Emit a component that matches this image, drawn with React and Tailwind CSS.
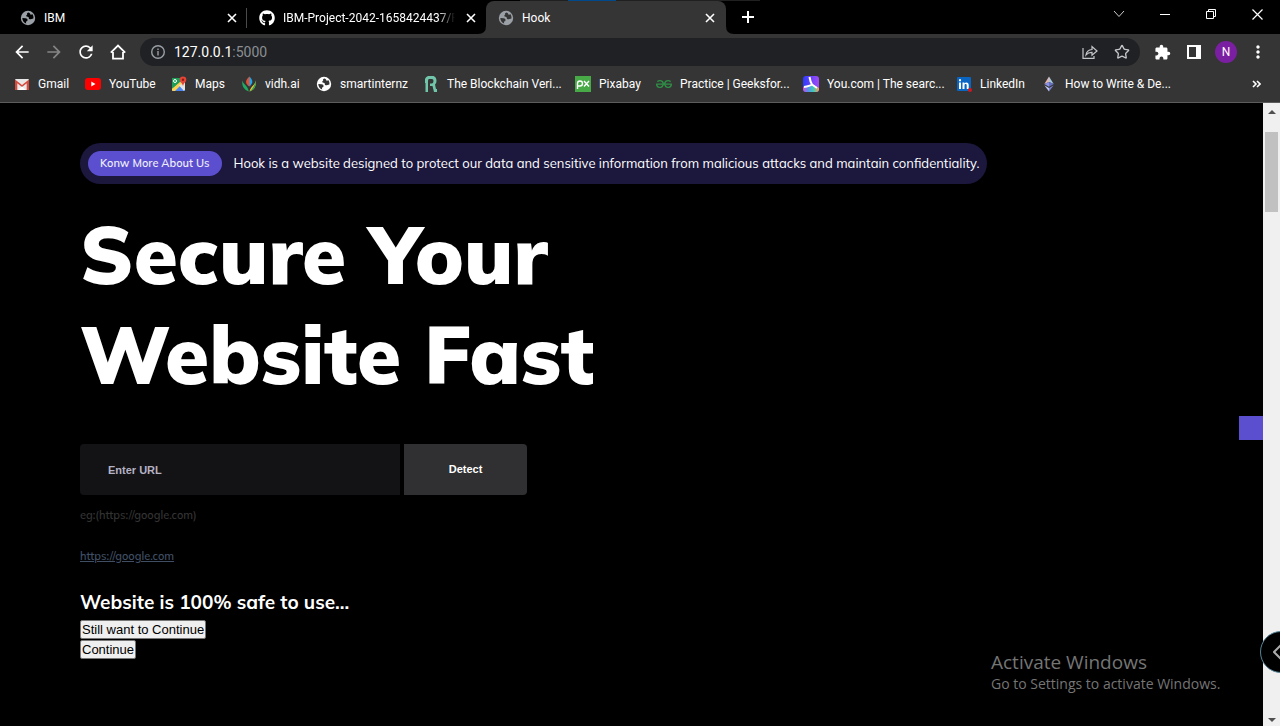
import React from "react";
import { Star } from "lucide-react";
import { FaGithub } from "react-icons/fa";
import { MdExtension, MdRefresh, MdArrowBack, MdArrowForward, MdMoreVert } from "react-icons/md";
import { SiGeeksforgeeks } from "react-icons/si";

const Globe = ({ color, hole }) => (
  <svg width="16" height="16" viewBox="0 0 16 16" className="shrink-0" aria-hidden="true">
    <circle cx="8" cy="8" r="7.2" fill={color} />
    <path
      fill={hole}
      d="M8.2 2.4C7 3 6.600 3.700 7.300 4.500C6.300 5 6 5.700 6.600 6.400L7.600 6.700C8.600 6.900 9 7.500 8.800 8.300C8.900 9.200 9.800 9.300 10.700 9.200L13.400 8.600C13.700 7 13.200 5.200 12.200 4.100C11.600 4.900 10.600 4.900 10.300 4.200C10.300 3.400 9.700 2.700 8.200 2.400ZM2.300 8.100L5.600 8.200C6.900 8.300 7.600 9 7.500 10L7.300 10.900C6.300 11.100 5.900 11.700 6 12.600L6.200 13.500C3.900 12.800 2.300 10.700 2.300 8.100Z"
    />
  </svg>
);

const GmailIcon = () => (
  <svg width="16" height="16" viewBox="0 0 16 16" aria-hidden="true">
    <rect x="1" y="3" width="14" height="11" rx="1" fill="#e8e8e8" />
    <path d="M1 3.500L8 9L15 3.500V14H12.700V7.300L8 11L3.300 7.300V14H1Z" fill="#d54b3d" />
    <path d="M4 14L8 10.500L12 14Z" fill="#fff" />
  </svg>
);

const YoutubeIcon = () => (
  <svg width="16" height="16" viewBox="0 0 16 16" aria-hidden="true">
    <rect x="0" y="2" width="16" height="12" rx="3" fill="#f00" />
    <path d="M6.300 5.500L10.500 8L6.300 10.500Z" fill="#fff" />
  </svg>
);

const MapsIcon = () => (
  <svg width="16" height="16" viewBox="0 0 16 16" aria-hidden="true">
    <rect x="1" y="2" width="13" height="13" rx="1" fill="#e8e3d8" />
    <path d="M1 2H9L10 6L1 13Z" fill="#1f9d58" />
    <path d="M3 15L9 9L14 15Z" fill="#4a86ee" />
    <path d="M1 13L9 6L11 8L4 15H2Z" fill="#ffd04b" />
    <path d="M9.500 8L13 12V15L8 9.500Z" fill="#dfe4ea" />
    <circle cx="4" cy="5" r="1.500" fill="none" stroke="#fff" />
    <path d="M12 0.500A3.300 3.300 0 0 1 15.300 3.800C15.300 6 12.700 7 12 10C11.300 7 8.700 6 8.700 3.800A3.300 3.300 0 0 1 12 .5Z" fill="#e64435" />
    <circle cx="12" cy="3.800" r="1.200" fill="#8c1d16" />
  </svg>
);

const VidhIcon = () => (
  <svg width="16" height="16" viewBox="0 0 16 16" aria-hidden="true">
    <path d="M8.500 .5C12.500 5 12 7 8.500 10.500C7 8 7 4 8.500 .5Z" fill="#24a5e8" />
    <path d="M8.500 .5C3.500 5 4.500 7.500 8.200 10.500C8.800 7 8 4 8.500 .5Z" fill="#e8502f" />
    <path d="M1.500 4.500C2 8.500 6.500 9 7.800 15.500C3.500 14 .3 10 1.500 4.500Z" fill="#1fab62" />
    <path d="M14.500 4.500C14.500 9 10 9.500 8.500 15.500C13 14.500 15.700 10 14.500 4.500Z" fill="#f2c230" />
    <path d="M14.500 4.500C15.700 10 13 14.500 8.500 15.500C12 12.500 14 9 14.500 4.500Z" fill="#21a558" />
  </svg>
);

const BlockchainIcon = () => (
  <svg width="16" height="16" viewBox="0 0 16 16" aria-hidden="true">
    <path
      fill="#70c5aa"
      fillRule="evenodd"
      d="M5 0H10.500Q13.500 1 13.500 5Q13.500 7.500 12 8.500L13 13H14V16H11L9.500 10H7V7.500H9Q10.500 7 10.500 5Q10.500 3 9 3H6Q5 3 5 5V16H2.500V7H2V3Q2.500 1 5 0Z"
    />
  </svg>
);

const PixabayIcon = () => (
  <svg width="16" height="16" viewBox="0 0 16 16" aria-hidden="true">
    <rect width="16" height="16" fill="#48a947" />
    <g fill="none" stroke="#fff" strokeWidth="1.400">
      <path d="M2.500 13V7.500A2.500 2.500 0 1 1 5 10H2.500" />
      <path d="M9 5L14 10.500M14 5L9 10.500" />
    </g>
  </svg>
);

const YouIcon = () => (
  <svg width="16" height="16" viewBox="0 0 16 16" aria-hidden="true">
    <defs>
      <linearGradient id="youTop" x1="0" y1="0" x2="1" y2="0">
        <stop offset="0" stopColor="#2b3cff" />
        <stop offset="1" stopColor="#a24bf5" />
      </linearGradient>
      <linearGradient id="youBottom" x1="0" y1="0" x2="1" y2="0">
        <stop offset="0" stopColor="#d44bd8" />
        <stop offset=".3" stopColor="#5a8cf0" />
        <stop offset=".65" stopColor="#3ccbb5" />
        <stop offset="1" stopColor="#ff9a5a" />
      </linearGradient>
    </defs>
    <rect width="16" height="16" rx="3" fill="url(#youTop)" />
    <path d="M0 11L9 8.500L16 12V13Q16 16 13 16H3Q0 16 0 13Z" fill="url(#youBottom)" />
    <path d="M6.500 1C7 4 7.500 6 9 8.500C7 10 4.500 10.500 1 11M9 8.500L14 12" fill="none" stroke="#fff" strokeWidth="2" />
  </svg>
);

const LinkedinIcon = () => (
  <svg width="16" height="16" viewBox="0 0 16 16" aria-hidden="true">
    <rect x="1" y="1" width="14" height="14" rx="1" fill="#0a66c2" />
    <path d="M3 6.500H5V13H3ZM3 3.300H5V5.200H3ZM6.500 6.500H8.400V7.400C9.500 5.900 12.700 6 12.700 9V13H10.700V9.500C10.700 7.500 8.500 7.600 8.500 9.500V13H6.500Z" fill="#fff" />
    <circle cx="14" cy="14" r="2" fill="#d01820" />
  </svg>
);

const EthereumIcon = () => (
  <svg width="16" height="16" viewBox="0 0 16 16" aria-hidden="true">
    <path d="M8 .5L3.300 8L8 6Z" fill="#e9b5a9" />
    <path d="M8 .5L12.700 8L8 6Z" fill="#a3c9e4" />
    <path d="M3.300 8L8 6V10.800Z" fill="#8b91e6" />
    <path d="M12.700 8L8 6V10.800Z" fill="#6570c4" />
    <path d="M3.300 9.300L8 12V15.500Z" fill="#bfc5ee" />
    <path d="M12.700 9.300L8 12V15.500Z" fill="#7a82d1" />
  </svg>
);

const bookmarks = [
  ["Gmail", <GmailIcon />],
  ["YouTube", <YoutubeIcon />],
  ["Maps", <MapsIcon />],
  ["vidh.ai", <VidhIcon />],
  ["smartinternz", <Globe color="#fff" hole="#353535" />],
  ["The Blockchain Veri...", <BlockchainIcon />],
  ["Pixabay", <PixabayIcon />],
  ["Practice | Geeksfor...", <SiGeeksforgeeks size={16} color="#2f8d46" />],
  ["You.com | The searc...", <YouIcon />],
  ["LinkedIn", <LinkedinIcon />],
  ["How to Write & De...", <EthereumIcon />],
];

const CloseTab = () => (
  <button aria-label="Close tab" className="grid size-4 shrink-0 place-items-center">
    <svg width="10" height="10" viewBox="0 0 10 10" stroke="#fff" strokeWidth="1.600">
      <path d="M1 1L9 9M9 1L1 9" />
    </svg>
  </button>
);

const Tab = ({ icon, title, active, faded }) => (
  <div
    className={
      active
        ? "relative flex h-full w-60 items-center gap-2 rounded-t-lg bg-[#353535] pr-2 pl-3"
        : "flex h-full w-[239px] items-center gap-2 pr-[7px] pl-3"
    }
  >
    {active && (
      <svg className="absolute bottom-0 -left-2" width="8" height="8" fill="#353535" aria-hidden="true">
        <path d="M8 0V8H0Q8 8 8 0Z" />
      </svg>
    )}
    {icon}
    <span
      className={
        faded
          ? "min-w-0 flex-1 whitespace-nowrap [mask-image:linear-gradient(to_right,black_90%,transparent)]"
          : "min-w-0 flex-1 whitespace-nowrap"
      }
    >
      {title}
    </span>
    <CloseTab />
    {active && (
      <svg className="absolute -right-2 bottom-0" width="8" height="8" fill="#353535" aria-hidden="true">
        <path d="M0 0V8H8Q0 8 0 0Z" />
      </svg>
    )}
  </div>
);

const TabStrip = () => (
  <header className="relative flex h-[34px] bg-black pl-2 text-white">
    <div className="absolute top-0 left-[520px] flex h-px w-60 bg-[#202020]">
      <span className="ml-12 w-12 bg-[#00498a]" />
    </div>
    <nav aria-label="Tabs" className="flex items-center pt-px">
      <Tab icon={<Globe color="#9aa0a6" hole="#000" />} title="IBM" />
      <span className="-ml-px h-5 w-px bg-[#4a4a4a]" />
      <Tab icon={<FaGithub size={16} className="shrink-0" />} title="IBM-Project-2042-1658424437/P" faded />
      <Tab icon={<Globe color="#9aa0a6" hole="#353535" />} title="Hook" active />
    </nav>
    <button aria-label="New tab" className="ml-2 grid w-7 place-items-center">
      <svg width="12" height="12" stroke="#fff" strokeWidth="2">
        <path d="M6 0V12M0 6H12" />
      </svg>
    </button>
    <div className="ml-auto flex h-7">
      <button aria-label="Search tabs" className="grid w-[46px] place-items-center">
        <svg width="12" height="8" fill="none" stroke="#ccc">
          <path d="M1 1L6 6.500L11 1" />
        </svg>
      </button>
      <button aria-label="Minimize" className="grid w-[46px] place-items-center">
        <svg width="10" height="10">
          <path d="M0 5H10V6H0Z" fill="#fff" />
        </svg>
      </button>
      <button aria-label="Restore" className="grid w-[46px] place-items-center">
        <svg width="10" height="10" fill="none" stroke="#fff">
          <path d="M.5 2.500H7.500V9.500H.5ZM2.500 2.500V.5H9.500V7.500H7.500" />
        </svg>
      </button>
      <button aria-label="Close" className="grid w-[46px] place-items-center">
        <svg width="11" height="11" stroke="#fff" strokeWidth="1.200">
          <path d="M.5 .5L10.500 10.500M10.500 .5L.5 10.500" />
        </svg>
      </button>
    </div>
  </header>
);

const toolButton = "grid h-7 w-8 shrink-0 place-items-center";

const Toolbar = () => (
  <div className="flex h-9 items-center bg-[#353535] px-[6px] text-white">
    <button aria-label="Back" className={toolButton}><MdArrowBack size={20} /></button>
    <button aria-label="Forward" className={toolButton}><MdArrowForward size={20} color="#858585" /></button>
    <button aria-label="Reload" className={toolButton}><MdRefresh size={20} /></button>
    <button aria-label="Home" className={toolButton}>
      <svg width="16" height="16" fill="none" stroke="#fff" strokeWidth="1.800">
        <path d="M3 8V14.600H13V8M.8 8.600L8 1.600L15.200 8.600" />
      </svg>
    </button>
    <div className="mr-[6px] ml-[6px] flex h-7 flex-1 items-center rounded-full bg-[#202124] pr-[2px] pl-[10px]">
      <svg width="16" height="16" fill="none" stroke="#9aa0a6" strokeWidth="1.400" aria-hidden="true">
        <circle cx="8" cy="8" r="6.300" />
        <path d="M8 7V11.500M8 4.500V6" />
      </svg>
      <div className="relative ml-2 flex flex-1 items-center">
        <span aria-hidden="true" className="text-sm leading-5">
          127.0.0.1<span className="text-[#8b8f94]">:5000</span>
        </span>
        <input aria-label="Address" defaultValue="127.0.0.1:5000" className="absolute inset-0 w-full bg-transparent text-sm text-transparent outline-none" />
      </div>
      <button aria-label="Share" className={toolButton}>
        <svg width="16" height="16" fill="none" stroke="#c4c7ca" strokeWidth="1.200">
          <path d="M1 4V14.400H12V12M4 11C4.500 7.500 6.500 5.800 10 5.500V2.500L15 7L10 11.200V8.300C7.500 8.200 5.600 9 4 11Z" />
        </svg>
      </button>
      <button aria-label="Bookmark" className={toolButton}><Star size={16} strokeWidth={2} color="#c4c7ca" /></button>
    </div>
    <button aria-label="Extensions" className={toolButton}><MdExtension size={17} /></button>
    <button aria-label="Side panel" className={toolButton}>
      <svg width="14" height="14">
        <path fillRule="evenodd" d="M0 0H14V14H0ZM2 2V12H9V2Z" fill="#fff" />
      </svg>
    </button>
    <button aria-label="Profile" className={toolButton}>
      <span className="grid size-[22px] place-items-center rounded-full bg-[#7b1fa2] text-xs">N</span>
    </button>
    <button aria-label="Menu" className={toolButton}><MdMoreVert size={20} /></button>
  </div>
);

const BookmarkBar = () => (
  <nav
    aria-label="Bookmarks"
    className="flex h-[33px] items-start border-b border-[#5c5c5c] bg-[#353535] pt-1 pr-4 pl-[14px] text-white"
  >
    <ul className="grid flex-1 grid-cols-[71px_86px_70px_75px_107px_152px_81px_147px_153px_85px_1fr]">
      {bookmarks.map(([label, icon]) => (
        <li key={label}>
          <a href="#" className="flex h-5 items-center gap-2 whitespace-nowrap">
            {icon}
            {label}
          </a>
        </li>
      ))}
    </ul>
    <button aria-label="More bookmarks" className="grid h-5 w-4 place-items-center">
      <svg width="9" height="8" fill="none" stroke="#fff" strokeWidth="1.600">
        <path d="M1 1L4 4L1 7M5 1L8 4L5 7" />
      </svg>
    </button>
  </nav>
);

const Hero = () => (
  <main className="min-w-0 flex-1 px-20 pt-10 font-[Mulish,Lato,sans-serif] text-white">
    <div className="flex h-[41px] w-fit items-center gap-3 rounded-full bg-[#1b173d] px-2">
      <button className="h-[25px] rounded-full bg-[#5b4fcf] px-3 text-[11px] font-semibold text-[#ececfa]">Konw More About Us</button>
      <p className="pb-0.5 text-[13px] leading-5 whitespace-nowrap">
        Hook is a website designed to protect our data and sensitive information from malicious attacks and maintain
        confidentiality.
      </p>
    </div>
    <h1 className="mt-5 text-[80px] leading-[100px] font-black">
      Secure Your
      <br />
      Website Fast
    </h1>
    <form className="mt-10 flex gap-1 font-['Liberation_Sans',sans-serif] text-[11px] font-bold" onSubmit={(e) => e.preventDefault()}>
      <input
        aria-label="Enter URL"
        placeholder="Enter URL"
        className="h-[51px] w-80 rounded-l bg-[#131315] px-7 outline-none placeholder:text-[#b5b2c4]"
      />
      <button className="h-[51px] w-[123px] rounded-r bg-[#302f31]">Detect</button>
    </form>
    <p className="mt-3 text-[11px] leading-4 font-semibold text-[#333333]">eg:(https://google.com)</p>
    <p className="mt-[25px] text-[11px] leading-4 font-semibold">
      <a href="https://google.com" className="text-[#3f4e63] underline">https://google.com</a>
    </p>
    <h2 className="mt-[22px] text-[19px] leading-8 font-bold">Website is 100% safe to use...</h2>
    <div className="mt-[2px] flex flex-col items-start gap-px font-['Liberation_Sans',sans-serif] text-[13px] leading-[17px] text-black">
      <button className="rounded-xs border border-[#767676] bg-[#efefef] px-px">Still want to Continue</button>
      <button className="rounded-xs border border-[#767676] bg-[#efefef] px-px">Continue</button>
    </div>
  </main>
);

const Scrollbar = () => (
  <div aria-hidden="true" className="flex w-[17px] flex-col items-center bg-[#f0f0f0] pt-[7px] pb-1">
    <svg width="8" height="4" fill="#505050"><path d="M4 0L8 4H0Z" /></svg>
    <span className="mt-[18px] h-20 w-[13px] bg-[#c1c1c1]" />
    <svg className="mt-auto" width="8" height="4" fill="#505050"><path d="M0 0H8L4 4Z" /></svg>
  </div>
);

export default function App() {
  return (
    <div className="relative flex min-h-screen flex-col overflow-hidden bg-black font-['Segoe_UI',Selawik,Roboto,sans-serif] text-xs">
      <TabStrip />
      <Toolbar />
      <BookmarkBar />
      <div className="relative flex flex-1">
        <Hero />
        <Scrollbar />
        <span className="absolute top-[313px] right-[17px] size-6 bg-[#5b4fcf]" />
      </div>
      <aside className="absolute right-[53px] bottom-8 w-[236px] font-['Open_Sans',sans-serif] text-[#757575]">
        <p className="text-[19px] leading-6 whitespace-nowrap">Activate Windows</p>
        <p className="text-sm leading-5 whitespace-nowrap">Go to Settings to activate Windows.</p>
      </aside>
      <button
        aria-label="Open panel"
        className="absolute -right-[22px] bottom-[53px] flex size-[42px] items-center rounded-full border border-[#568396] bg-black pl-3 ring-1 ring-black ring-inset"
      >
        <svg width="9" height="16" fill="none" stroke="#aaa" strokeWidth="2"><path d="M8 1L1 8L8 15" /></svg>
      </button>
    </div>
  );
}
